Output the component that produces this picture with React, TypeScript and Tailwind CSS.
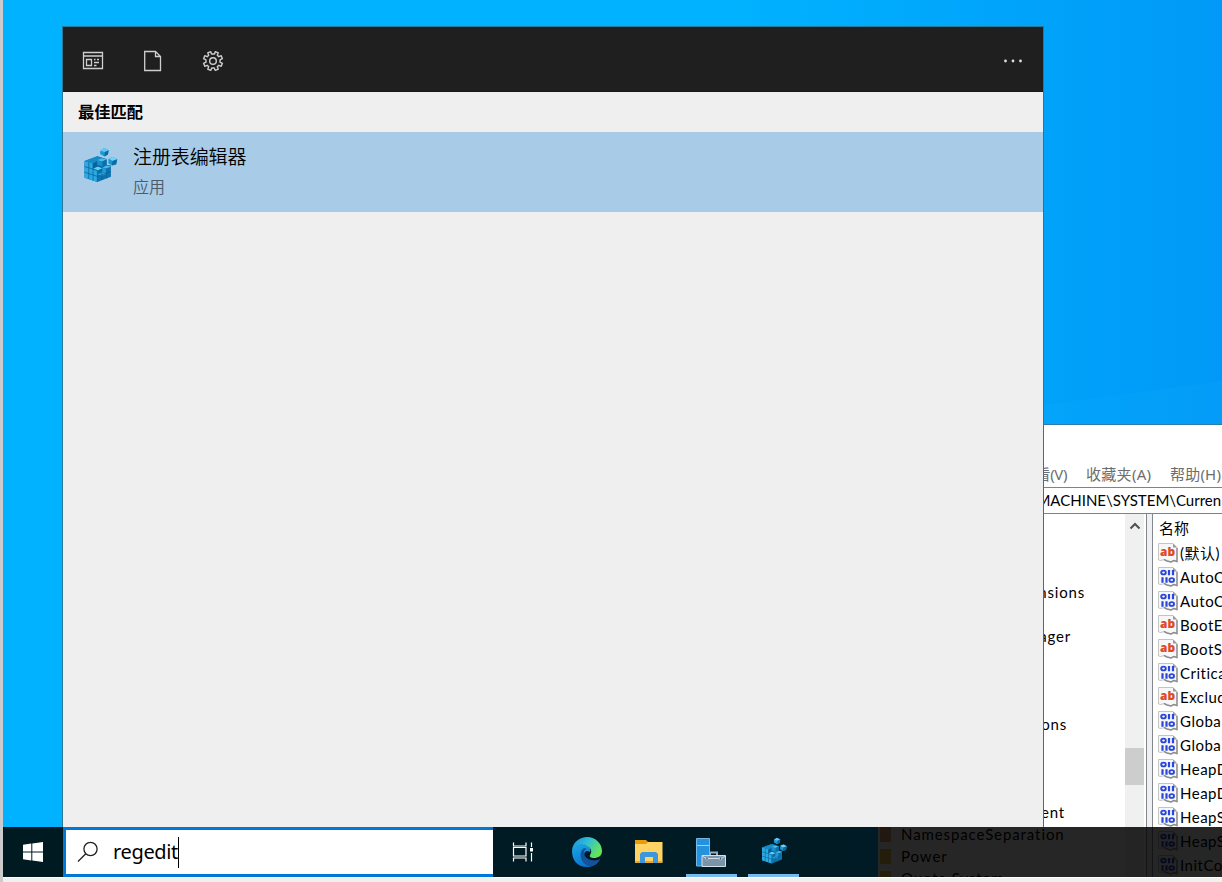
import React from "react";

const LATIN_CJK = "font-['Noto_Sans','Noto_Sans_CJK_SC',sans-serif]";
const LIST_FONT = "font-['Lato','Noto_Sans_CJK_SC',sans-serif]";

type ValueKind = "sz" | "bin";

const VALUES: { kind: ValueKind; name: string }[] = [
  { kind: "sz", name: "(默认)" },
  { kind: "bin", name: "AutoC" },
  { kind: "bin", name: "AutoC" },
  { kind: "sz", name: "BootE" },
  { kind: "sz", name: "BootS" },
  { kind: "bin", name: "Critica" },
  { kind: "sz", name: "Exclud" },
  { kind: "bin", name: "Globa" },
  { kind: "bin", name: "Globa" },
  { kind: "bin", name: "HeapD" },
  { kind: "bin", name: "HeapD" },
  { kind: "bin", name: "HeapS" },
  { kind: "bin", name: "HeapS" },
  { kind: "bin", name: "InitCo" },
];

type TreeRow = { label: string; width?: string; folder?: string };

const TREE: TreeRow[] = [
  { label: "" },
  { label: "" },
  { label: "" },
  { label: "Extensions", width: "w-[207px]" },
  { label: "" },
  { label: "Session Manager", width: "w-[193px]" },
  { label: "" },
  { label: "" },
  { label: "" },
  { label: "Configurations", width: "w-[189px]" },
  { label: "" },
  { label: "" },
  { label: "" },
  { label: "Memory Management", width: "w-[187px]" },
  { label: "NamespaceSeparation", folder: "bg-[#dba27c]" },
  { label: "Power", folder: "bg-[#f0c450]" },
  { label: "Quota System", folder: "bg-[#f0c450]" },
];

function RegCubes({ className }: { className?: string }) {
  return (
    <svg viewBox="24 20 108 112" className={className}>
      {/* stack: top, left and right faces */}
      <path d="M28 62L67 48L95 56L95 74L108 76V110L67 126L28 113Z" fill="#0c75b0" />
      <path d="M28 62L67 48L81 52L54 70Z" fill="#168bc6" />
      <path d="M28 62L54 70V86L67 90V126L28 113Z" fill="#2ba9e2" />
      <path d="M54 70L67 64L80 69V90L67 96L54 88Z" fill="#0a609a" />
      <path d="M66 60L80 54L95 58L82 64Z" fill="#4abdea" />
      <path d="M82 64L95 58V76L82 82Z" fill="#0b6fa9" />
      <path d="M66 60L82 64V80L66 74Z" fill="#168fcb" />
      <path d="M54 86L68 79L82 84L68 91Z" fill="#5fd0f5" />
      <path d="M54 87L68 91V108L54 103Z" fill="#2ba9e2" />
      <path d="M82 82L95 76L108 79L95 85Z" fill="#46b9e8" />
      <path d="M82 83L95 86V100L82 97Z" fill="#1f9bd6" />
      <path d="M68 104L82 98L95 101L80 107Z" fill="#37b2e4" />
      <path d="M28 79L67 91M28 96L67 109M41 66V117M54 70V122M67 91V126M81 100V120M95 85V115M67 109L108 94" fill="none" stroke="#0a5f96" strokeWidth="2.200" />
      {/* loose cube above */}
      <path d="M76 31L87 23L101 30L99 43L88 49L75 41Z" fill="#1f98d4" />
      <path d="M76 31L87 23L101 30L90 35Z" fill="#5fcbf4" />
      <path d="M90 35L101 30L99 43L88 49Z" fill="#0b6ba3" />
      {/* loose cube at the right */}
      <path d="M101 55L114 50L127 57L124 72L111 76L100 69Z" fill="#1c93cf" />
      <path d="M101 55L114 50L127 57L113 62Z" fill="#6fd5f8" />
      <path d="M113 62L127 57L124 72L111 76Z" fill="#0b6ba3" />
    </svg>
  );
}

function ValueIcon({ kind }: { kind: ValueKind }) {
  return (
    <svg viewBox="0 0 20 20" className="size-5 shrink-0">
      <path d="M0.500 0.500H15L19 4.500V19L16 17.500L13 19L9 18L6 16.500L3 17.500L0.500 17Z" fill="#f7f7f7" stroke="#c4c4c4" />
      <path d="M19 5V18.500L16 17.500L13 19L9 18L6 16.500" fill="none" stroke="#8d8d8d" strokeWidth="1.400" />
      <path d="M15 0.500V4.500H19Z" fill="#999" />
      {kind === "sz" ? (
        <text x="2" y="13" fontSize="13" fontWeight="800" fontFamily="Open Sans" fill="#dc4a26" textLength="15" lengthAdjust="spacingAndGlyphs">ab</text>
      ) : (
        <g stroke="#2947dc" strokeWidth="1.900" fill="none">
          <ellipse cx="5.500" cy="5.500" rx="2.300" ry="1.900" />
          <path d="M11 3V8.300M15 3V8.300M4.500 10.200V15.700M8.500 10.200V15.700" strokeWidth="2.200" />
          <ellipse cx="13.700" cy="13" rx="2.300" ry="1.900" />
        </g>
      )}
    </svg>
  );
}

function RegistryWindow() {
  return (
    <section className="absolute left-[877px] top-[424px] flex h-[453px] w-[345px] flex-col overflow-hidden border-l border-t border-[#2b7cab] bg-white">
      <div className="h-[36px] shrink-0" />
      <div className={`flex h-[26px] shrink-0 items-center pl-[143px] text-[15px] text-[#6d6d6d] ${LATIN_CJK}`}>
        <span className="w-[65px] shrink-0 whitespace-nowrap tracking-[-0.4px]">查看(V)</span>
        <span className="w-[84px] shrink-0 whitespace-nowrap tracking-[0.3px]">收藏夹(A)</span>
        <span className="whitespace-nowrap tracking-[0.2px]">帮助(H)</span>
      </div>
      <div className={`flex h-[27px] shrink-0 items-center border-y-[1.5px] border-[#828282] text-[15px] text-black ${LIST_FONT}`}>
        <span className="w-[228px] shrink-0 whitespace-nowrap text-right">HKEY_LOCAL_MACHINE</span>
        <span className="whitespace-nowrap">\SYSTEM\Curren</span>
      </div>
      <div className="flex min-h-0 grow bg-[#f0f0f0]">
        <div className={`flex w-[269px] shrink-0 border-r border-[#828790] bg-white text-[15px] leading-[22px] text-black ${LIST_FONT}`}>
          <div className="flex w-[247px] shrink-0 flex-col pt-[1px]">
            {TREE.map((row, i) => (
              <div key={i} className="flex h-[22px] shrink-0 items-center">
                {row.folder ? (
                  <>
                    <span className={`ml-[2px] mr-[10px] h-[15px] w-[11px] shrink-0 ${row.folder}`} />
                    <span className="whitespace-nowrap tracking-[0.9px]">{row.label}</span>
                  </>
                ) : (
                  <span className={`whitespace-nowrap text-right tracking-[0.8px] ${row.width ?? ""}`}>{row.label}</span>
                )}
              </div>
            ))}
          </div>
          <div className="flex w-[19px] shrink-0 flex-col items-center bg-[#f0f0f0]">
            <svg viewBox="0 0 12 8" className="mt-[8px] h-2 w-3">
              <path d="M1.500 6.500L6 2L10.500 6.500" fill="none" stroke="#505050" strokeWidth="2" />
            </svg>
            <div className="mt-[218px] h-[37px] w-full shrink-0 bg-[#cdcdcd]" />
          </div>
        </div>
        <div className={`ml-[5px] flex grow flex-col border-l border-[#828790] bg-white text-[15px] text-black ${LIST_FONT}`}>
          <div className="flex h-[27px] shrink-0 items-center pl-[6px] pt-[2px]">名称</div>
          {VALUES.map((v, i) => (
            <div key={i} className="flex h-6 shrink-0 items-center gap-[2px] pl-[5px]">
              <ValueIcon kind={v.kind} />
              <span className="whitespace-nowrap tracking-[0.5px]">{v.name}</span>
            </div>
          ))}
        </div>
      </div>
    </section>
  );
}

function SearchPanel() {
  return (
    <section className={`absolute left-[62px] top-[26px] flex h-[801px] w-[982px] flex-col border-x border-t border-[#2b7896] bg-[#efefef] ${LATIN_CJK}`}>
      <header className="flex h-[65px] shrink-0 items-center border-b border-[#171717] bg-[#1f1f1f] pl-[19px] pr-[20px] pt-[4px] text-[#cfcfcf]">
        <svg viewBox="0 0 22 20" className="h-5 w-[22px]" fill="none" stroke="currentColor" strokeWidth="1.300">
          <path d="M1.500 1.500H20.500V17.500H1.500ZM1.500 5H20.500M4.500 8.500H9.500V14.500H4.500ZM12 8.500H13.500M15 8.500H17M12 11.500H17M12 14.500H14.500" />
        </svg>
        <svg viewBox="0 0 18 22" className="ml-[40px] h-[22px] w-[18px]" fill="none" stroke="currentColor" strokeWidth="1.300">
          <path d="M0.700 1.500H11.500L16.500 6.500V20.500H0.700ZM11.500 1.500V6.500H16.500" />
        </svg>
        <svg viewBox="0 0 24 24" className="ml-[39px] size-6" fill="none" stroke="currentColor" strokeWidth="1.400">
          <circle cx="12" cy="12" r="3.300" />
          <path d="M10.500 5L9.700 2.600L6.700 3.800L7.700 6.200L6.200 7.700L3.800 6.700L2.600 9.700L5 10.800V13.200L2.600 14.300L3.800 17.300L6.200 16.300L7.700 17.800L6.700 20.200L9.700 21.400L10.800 19H13.200L14.300 21.400L17.300 20.200L16.300 17.800L17.800 16.300L20.200 17.300L21.400 14.300L19 13.200V10.800L21.400 9.700L20.200 6.700L17.800 7.700L16.300 6.200L17.300 3.800L14.300 2.600L13.500 5Z" strokeLinejoin="round" />
        </svg>
        <svg viewBox="0 0 20 4" className="ml-auto h-1 w-5" fill="#dedede">
          <circle cx="2.500" cy="2" r="1.400" />
          <circle cx="10" cy="2" r="1.400" />
          <circle cx="17.500" cy="2" r="1.400" />
        </svg>
      </header>
      <h2 className="flex h-10 shrink-0 items-center pl-[15px] text-[16.3px] font-bold text-black">最佳匹配</h2>
      <div className="flex h-20 shrink-0 bg-[#a8cbe8] pl-[20px]">
        <RegCubes className="mt-[15px] h-[37px] w-[36px]" />
        <div className="ml-[14px] flex flex-col pt-[11px]">
          <span className="text-[19px] font-[350] leading-[28px] tracking-[-0.1px] text-black">注册表编辑器</span>
          <span className="mt-[4px] text-[16px] font-[350] leading-[24px] text-[#4b5b68]">应用</span>
        </div>
      </div>
    </section>
  );
}

function Taskbar() {
  return (
    <nav className="absolute left-[3px] top-[827px] flex h-[50px] w-[1219px]">
      <div className="flex w-[875px] bg-linear-to-r from-[#001a22] to-[#001b25]">
        <div className="flex w-[60px] shrink-0 items-center justify-center">
          <svg viewBox="0 0 20 20" className="size-5" fill="#fff">
            <path d="M0 2.800L8.300 1.600V9.500H0ZM9.300 1.400L20 0V9.500H9.300ZM0 10.500H8.300V18.400L0 17.200ZM9.300 10.500H20V20L9.300 18.600Z" />
          </svg>
        </div>
        <div className={`flex w-[430px] shrink-0 items-center border-y-[3px] border-l-[3px] border-[#0078d7] bg-white pl-[11px] text-[20px] text-black ${LATIN_CJK}`}>
          <svg viewBox="0 0 22 22" className="size-[22px]" fill="none" stroke="#202020" strokeWidth="1.300">
            <circle cx="13.500" cy="8" r="6.600" />
            <path d="M8.800 12.800L1 20.500" />
          </svg>
          <span className="ml-[14px] tracking-[-0.35px]">regedit</span>
          <span className="h-[31px] w-px bg-black" />
        </div>
        <div className="flex w-[61px] shrink-0 items-center justify-center pr-[2px]">
          <svg viewBox="0 0 22 20" className="h-5 w-[22px]" fill="none" stroke="#fff" strokeWidth="1.200">
            <path d="M1.500 0.500V4H14V0.500M1.500 5.500H14V14H1.500ZM1.500 19.500V16H14V19.500M19.500 0.500V5M19.500 11V19.500" />
            <path d="M18 6H21V9.500H18Z" fill="#fff" stroke="none" />
          </svg>
        </div>
        <div className="flex w-[65px] shrink-0 items-center justify-center">
          <svg viewBox="0 0 30 30" className="size-[30px]">
            <defs>
              <linearGradient id="edgeTop" x1="0" y1="0" x2="1" y2="0.500">
                <stop offset="0" stopColor="#168bd7" />
                <stop offset="0.500" stopColor="#30bed5" />
                <stop offset="1" stopColor="#67e35b" />
              </linearGradient>
              <linearGradient id="edgeBody" x1="0" y1="0" x2="0.500" y2="1">
                <stop offset="0" stopColor="#1ca9e6" />
                <stop offset="1" stopColor="#0873cb" />
              </linearGradient>
            </defs>
            <path d="M0 14C1 7 7 5 12 7C17 8 19 11 18 15C13 12 11 17 13 21C16 27 22 27 28 22C25 28 20 30 15 30C6 30 0 24 0 14Z" fill="url(#edgeBody)" />
            <path d="M12 11C6 15 8 26 17 29.500C22 29 26 26 28 22C23 25 15 23 13 19C11 16 12 13 15 12Z" fill="#14529d" />
            <path d="M0 13C1 5 8 0 15 0C24 0 30 7 30 14C30 19 26 21 22 21C19 21 17 20 18 18C22 13 16 7 9 7C5 7 2 9 0 13Z" fill="url(#edgeTop)" />
          </svg>
        </div>
        <div className="flex w-[60px] shrink-0 items-center justify-center">
          <svg viewBox="0 0 28 24" className="h-6 w-7">
            <path d="M0 0H11L13 2V6H0Z" fill="#e79c0b" />
            <path d="M0 4H11L13 2H27.500V22H0Z" fill="#ffd464" />
            <path d="M0 21H27.500V23H0Z" fill="#e4a927" />
            <path d="M5 23V14L7 12H21L23 14V23H18V17H10V23Z" fill="#3c97dd" />
          </svg>
        </div>
        <div className="flex w-[64px] shrink-0 flex-col items-center justify-end">
          <svg viewBox="0 0 30 29" className="mb-[7px] h-[29px] w-[30px]">
            <path d="M0.500 0.500H13.500V28H0.500Z" fill="#2492df" stroke="#78b7df" />
            <path d="M1 7.500H13" stroke="#9bd4f7" />
            <path d="M14 18V14.500H21V18" fill="none" stroke="#9aaebb" strokeWidth="2" />
            <path d="M6 17.500H29.500V28.500H6Z" fill="#7893aa" stroke="#d5e1e9" />
            <path d="M6.500 18L10 20.500H25.500L29 18" stroke="#d0dce5" fill="none" />
            <path d="M10 19H12V22H10ZM23.500 19H25.500V22H23.500Z" fill="#4c6374" stroke="#d0dce5" strokeWidth="0.500" />
          </svg>
          <span className="h-[3px] w-[51px] bg-[#76b9ed]" />
        </div>
        <div className="flex w-[60px] shrink-0 flex-col items-center justify-end">
          <RegCubes className="mb-[9px] ml-[3px] h-[28px] w-[27px]" />
          <span className="h-[3px] w-[51px] bg-[#76b9ed]" />
        </div>
      </div>
      <div className="grow bg-black/85" />
    </nav>
  );
}

export default function App() {
  return (
    <main className="relative h-[882px] w-[1222px] overflow-hidden border-l-[3px] border-[#cbcbcb] bg-[#f0f0f0]">
      <div className="h-[878px] w-[1219px] border-b border-white bg-linear-to-r from-[#00b2ff] from-60% to-[#0099f7]" />
      <svg viewBox="0 0 179 424" className="absolute right-0 top-0 h-[424px] w-[179px]">
        <path d="M0 405L179 381V424H0Z" fill="#15b0ff" fillOpacity="0.16" />
      </svg>
      <div className="absolute -left-[3px] top-0 h-[882px] w-[1222px]">
        <RegistryWindow />
        <SearchPanel />
        <Taskbar />
      </div>
    </main>
  );
}
